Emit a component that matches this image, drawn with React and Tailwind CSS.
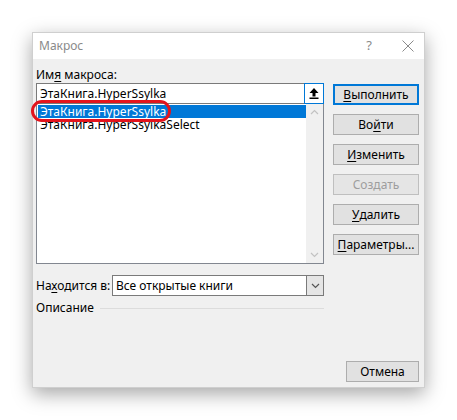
import React from "react";

const font = { fontFamily: '"Noto Sans", "Open Sans", sans-serif' };

const Btn = ({ children, primary, disabled }) => (
  <button
    className={
      "h-[21px] w-[86px] text-[12px] leading-none flex items-center justify-center " +
      (primary
        ? "border-2 border-[#0078d7] bg-[#e1e1e1] text-black"
        : disabled
        ? "border border-[#bfbfbf] bg-[#e5e5e5] text-[#9d9d9d]"
        : "border border-[#adadad] bg-[#e1e1e1] text-black")
    }
  >
    {children}
  </button>
);

const ArrowUp = () => (
  <svg width="10" height="11" viewBox="0 0 10 11">
    <path d="M5 0 L9.5 5 L6.5 5 L6.5 8.5 L3.5 8.5 L3.5 5 L0.5 5 Z" fill="#000" />
    <rect x="0.5" y="9.5" width="9" height="1.5" fill="#000" />
  </svg>
);

const Chevron = ({ up, color = "#c2c2c2" }) => (
  <svg width="9" height="6" viewBox="0 0 9 6">
    <path d={up ? "M1 5 L4.5 1.5 L8 5" : "M1 1 L4.5 4.5 L8 1"} fill="none" stroke={color} strokeWidth="1.2" />
  </svg>
);

export default function App() {
  return (
    <div className="w-[457px] h-[420px] bg-white pt-[32px] pl-[32px]" style={font}>
      <div className="w-[393px] h-[356px] bg-[#f0f0f0] border border-[#cfcfcf] shadow-[0_6px_18px_rgba(0,0,0,0.35)] flex flex-col">
        {/* title */}
        <div className="h-[26px] bg-white flex items-center pl-[6px] pr-[10px]">
          <span className="text-[12px] text-[#8a8a8a] flex-1">Макрос</span>
          <span className="text-[13px] text-[#8a8a8a] mr-[30px]">?</span>
          <svg width="12" height="12" viewBox="0 0 12 12">
            <path d="M0.5 0.5 L11.5 11.5 M11.5 0.5 L0.5 11.5" stroke="#8a8a8a" strokeWidth="1" />
          </svg>
        </div>

        <div className="flex flex-1 pl-[3px] pr-[5px] pb-[5px]">
          {/* left column */}
          <div className="w-[288px] flex flex-col">
            <div className="h-[24px] flex items-end pb-[2px] text-[12px] text-black leading-none">
              Им<u className="underline underline-offset-2">я</u>&nbsp;макроса:
            </div>
            <div className="h-[21px] bg-white border border-[#7a7a7a] flex">
              <div className="flex-1 flex items-center pl-[3px] text-[12px] text-black">ЭтаКнига.HyperSsylka</div>
              <div className="w-[20px] -mt-px -mr-px -mb-px border border-[#0078d7] bg-white flex items-center justify-center">
                <ArrowUp />
              </div>
            </div>
            <div className="relative h-[160px] bg-white border border-[#828790] border-t-0 flex">
              <div className="flex-1 pt-px pl-px">
                <div className="h-[13px] bg-[#0078d7] text-white text-[12px] leading-[13px] pl-[2px]">ЭтаКнига.HyperSsylka</div>
                <div className="h-[13px] text-black text-[12px] leading-[13px] pl-[2px]">ЭтаКнига.HyperSsylkaSelect</div>
              </div>
              <div className="w-[17px] bg-[#f0f0f0] flex flex-col justify-between items-center py-[5px]">
                <Chevron up />
                <Chevron />
              </div>
              <div className="absolute left-[-6px] top-[-4px] w-[140px] h-[22px] border-[3px] border-[#e3141d] rounded-[11px]" />
            </div>
            <div className="mt-[11px] h-[21px] flex items-center">
              <div className="w-[76px] text-[12px] text-black">
                На<u className="underline underline-offset-2">х</u>одится в:
              </div>
              <div className="flex-1 h-full bg-white border border-[#7a7a7a] flex">
                <div className="flex-1 flex items-center pl-[3px] text-[12px] text-black">Все открытые книги</div>
                <div className="w-[17px] bg-[#e5e5e5] border-l border-[#7a7a7a] flex items-center justify-center">
                  <Chevron color="#555" />
                </div>
              </div>
            </div>
            <div className="mt-[3px] flex items-center gap-[6px]">
              <span className="text-[12px] text-black">Описание</span>
              <div className="flex-1 h-px bg-[#dcdcdc]" />
            </div>
          </div>

          {/* right column */}
          <div className="ml-[9px] flex flex-col">
            <div className="h-[25px]" />
            <div className="flex flex-col gap-[9px]">
              <Btn primary><u className="underline underline-offset-2">В</u>ыполнить</Btn>
              <Btn>Во<u className="underline underline-offset-2">й</u>ти</Btn>
              <Btn><u className="underline underline-offset-2">И</u>зменить</Btn>
              <Btn disabled>Создать</Btn>
              <Btn><u className="underline underline-offset-2">У</u>далить</Btn>
              <Btn><u className="underline underline-offset-2">П</u>араметры...</Btn>
            </div>
            <div className="flex-1" />
            <div className="flex justify-end">
              <button className="h-[21px] w-[73px] border border-[#adadad] bg-[#e1e1e1] text-[12px] text-black flex items-center justify-center">
                Отмена
              </button>
            </div>
          </div>
        </div>
      </div>
    </div>
  );
}
